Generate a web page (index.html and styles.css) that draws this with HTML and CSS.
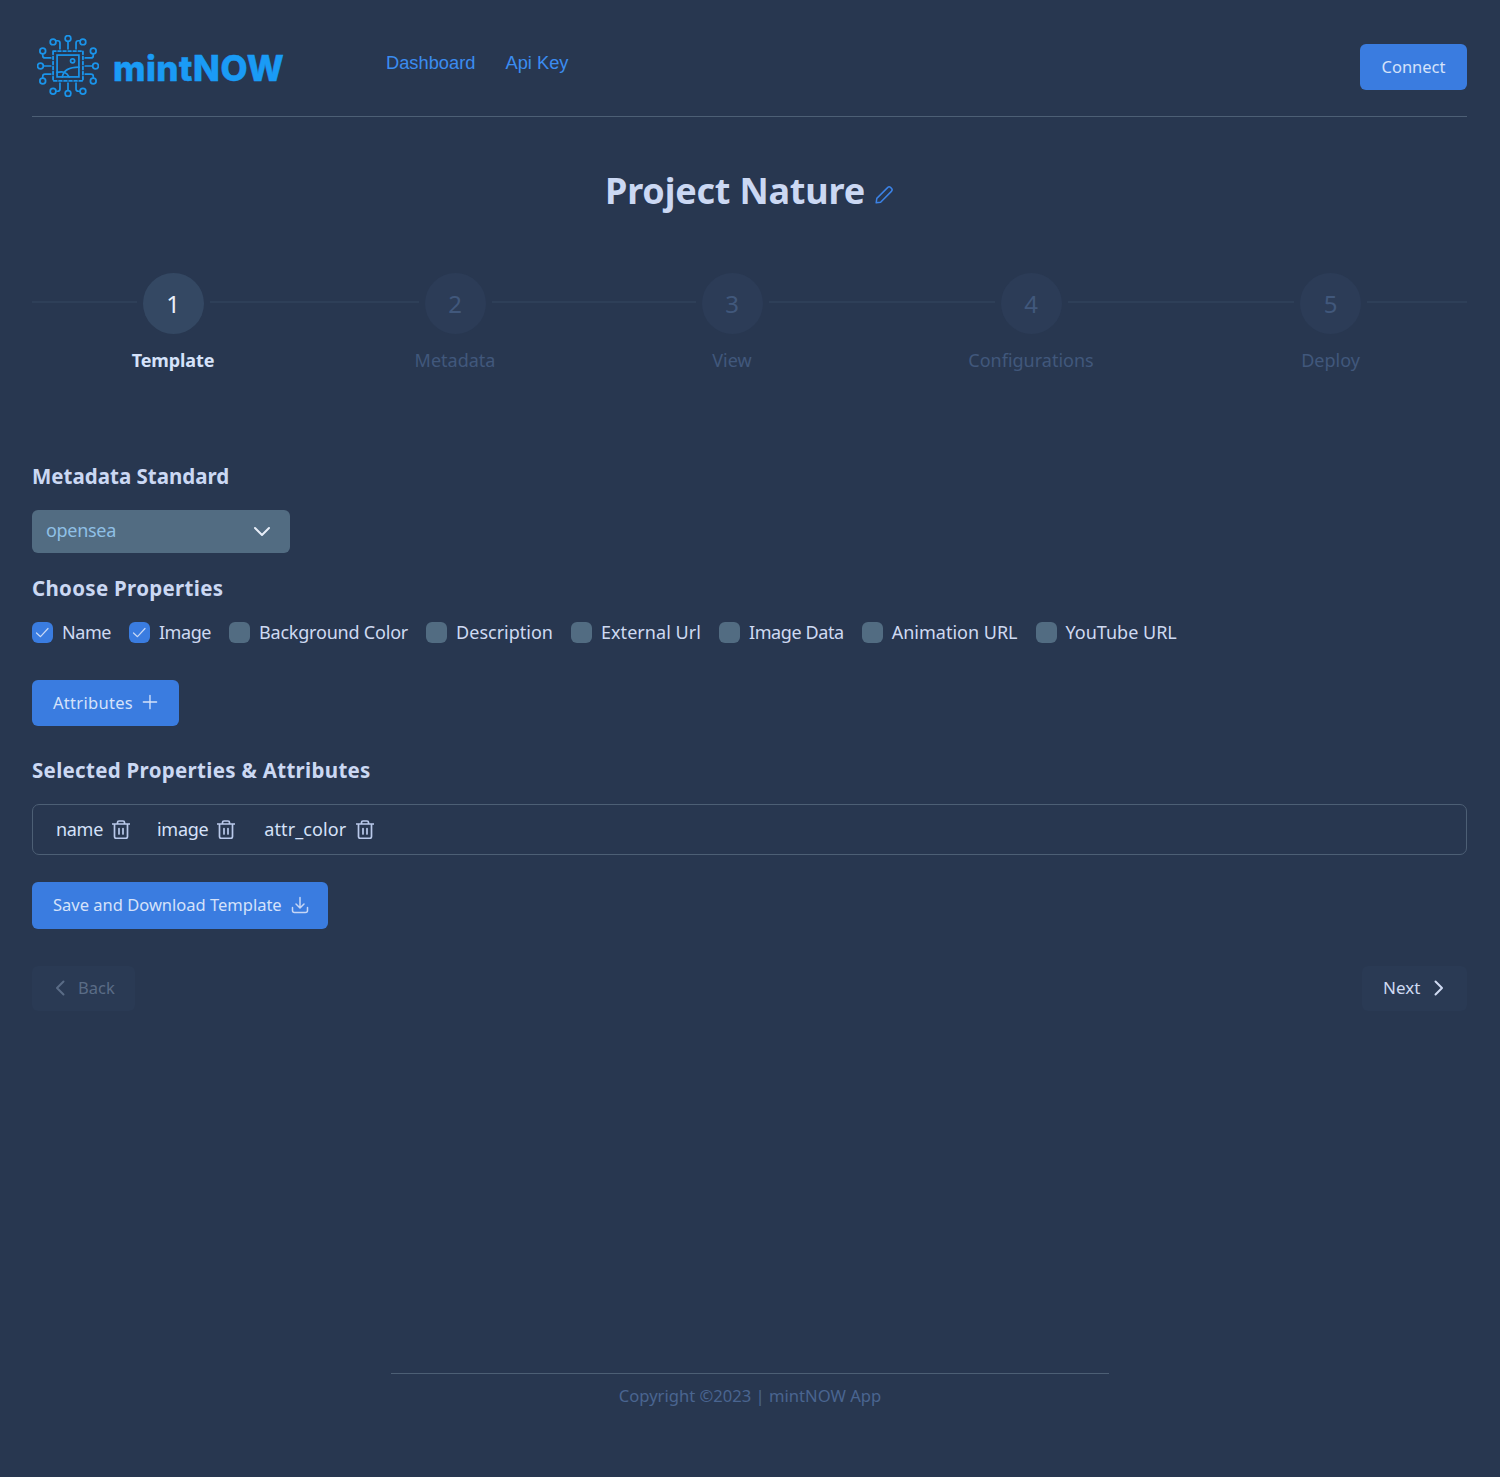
FILE: index.html
```html
<!DOCTYPE html>
<html lang="en">
<head>
<meta charset="utf-8">
<title>mintNOW</title>
<link rel="stylesheet" href="styles.css">
</head>
<body>
<div class="page">
  <header class="header">
    <div class="brand">
      <svg class="logo-mark" viewBox="4 4 54 54" fill="none" stroke="#1a94ea" stroke-width="1.5" stroke-linecap="round">
        <rect x="21.500" y="21.500" width="19" height="19" stroke-width="1.500"/>
        <rect x="18" y="18" width="26" height="26" stroke-width="1.600" stroke-dasharray="2.400 2"/>
        <circle cx="35" cy="26.500" r="1.800"/>
        <path d="M21.500 36.500c5-1 8-.5 10.500 4M26 40.500c1-5 6-8.500 14.500-8.500"/>
        <path d="M31 10v6"/><circle cx="31" cy="7" r="2.500"/>
        <path d="M31 52v-6"/><circle cx="31" cy="55" r="2.500"/>
        <path d="M10 31h6"/><circle cx="7" cy="31" r="2.500"/>
        <path d="M52 31h-6"/><circle cx="55" cy="31" r="2.500"/>
        <path d="M24 16v-5q0-2-2-2h-1"/><circle cx="18" cy="10" r="2.500"/>
        <path d="M38 16v-5q0-2 2-2h1"/><circle cx="44" cy="10" r="2.500"/>
        <path d="M24 46v5q0 2-2 2h-1"/><circle cx="18" cy="53" r="2.500"/>
        <path d="M38 46v5q0 2 2 2h1"/><circle cx="44" cy="53" r="2.500"/>
        <path d="M16 24h-5q-2 0-2-2v-1"/><circle cx="9" cy="18" r="2.500"/>
        <path d="M46 24h5q2 0 2-2v-1"/><circle cx="53" cy="18" r="2.500"/>
        <path d="M16 38h-5q-2 0-2 2v1"/><circle cx="9" cy="44" r="2.500"/>
        <path d="M46 38h5q2 0 2 2v1"/><circle cx="53" cy="44" r="2.500"/>
      </svg>
      <span class="logo-text">mintNOW</span>
    </div>
    <nav class="nav">
      <a class="nav-link">Dashboard</a>
      <a class="nav-link">Api Key</a>
    </nav>
    <button class="btn btn-connect">Connect</button>
  </header>

  <h1 class="title">
    <span>Project Nature</span>
    <svg class="pencil" viewBox="0 0 20 20" fill="none" stroke="#3b82e6" stroke-width="1.5" stroke-linejoin="round">
      <path d="M2.200 17.800l.6-4.400L13.600 2.600a2.200 2.200 0 0 1 3.100 0l.7.7a2.200 2.200 0 0 1 0 3.100L6.600 17.200z"/>
    </svg>
  </h1>

  <div class="stepper">
    <div class="step active"><div class="step-top"><i class="step-line"></i><span class="step-circle">1</span><i class="step-line"></i></div><span class="step-label">Template</span></div>
    <div class="step"><div class="step-top"><i class="step-line"></i><span class="step-circle">2</span><i class="step-line"></i></div><span class="step-label">Metadata</span></div>
    <div class="step"><div class="step-top"><i class="step-line"></i><span class="step-circle">3</span><i class="step-line"></i></div><span class="step-label">View</span></div>
    <div class="step"><div class="step-top"><i class="step-line"></i><span class="step-circle">4</span><i class="step-line"></i></div><span class="step-label">Configurations</span></div>
    <div class="step"><div class="step-top"><i class="step-line"></i><span class="step-circle">5</span><i class="step-line"></i></div><span class="step-label">Deploy</span></div>
  </div>

  <h2 class="section-title first">Metadata Standard</h2>
  <div class="select">
    <span class="select-value">opensea</span>
    <svg class="select-chevron" viewBox="0 0 20 20" fill="none" stroke="#e8eef8" stroke-width="2" stroke-linecap="round" stroke-linejoin="round"><path d="M3 6l7 7 7-7"/></svg>
  </div>

  <h2 class="section-title choose">Choose Properties</h2>
  <div class="checks">
    <label class="check tight"><span class="box on"><svg viewBox="0 0 21 21" fill="none" stroke="#c8d8f5" stroke-width="1.200" stroke-linecap="round" stroke-linejoin="round"><path d="M4.500 11l4 3.700L16 6.500"/></svg></span>Name</label>
    <label class="check tight"><span class="box on"><svg viewBox="0 0 21 21" fill="none" stroke="#c8d8f5" stroke-width="1.200" stroke-linecap="round" stroke-linejoin="round"><path d="M4.500 11l4 3.700L16 6.500"/></svg></span>Image</label>
    <label class="check"><span class="box"></span>Background Color</label>
    <label class="check loose"><span class="box"></span>Description</label>
    <label class="check wide"><span class="box"></span>External Url</label>
    <label class="check mid"><span class="box"></span>Image Data</label>
    <label class="check loose"><span class="box"></span>Animation URL</label>
    <label class="check loose"><span class="box"></span>YouTube URL</label>
  </div>

  <button class="btn btn-attr">Attributes
    <svg class="btn-icon" viewBox="0 0 18 18" fill="none" stroke="#d5e2fa" stroke-width="1.500" stroke-linecap="round"><path d="M9 1.500v15M1.500 9h15"/></svg>
  </button>

  <h2 class="section-title selected">Selected Properties &amp; Attributes</h2>
  <div class="chips">
    <span class="chip">name<svg class="trash" viewBox="1 .5 18 19" fill="none" stroke="#b9c9ea" stroke-width="1.700" stroke-linecap="round" stroke-linejoin="round"><path d="M1.500 4.500h17M6.500 4.500V3a1.500 1.500 0 0 1 1.500-1.500h4A1.500 1.500 0 0 1 13.500 3v1.500M3.500 4.500V17a1.800 1.800 0 0 0 1.800 1.800h9.400a1.800 1.800 0 0 0 1.800-1.800V4.500M8 9v5.500M12 9v5.500"/></svg></span>
    <span class="chip">image<svg class="trash" viewBox="1 .5 18 19" fill="none" stroke="#b9c9ea" stroke-width="1.700" stroke-linecap="round" stroke-linejoin="round"><path d="M1.500 4.500h17M6.500 4.500V3a1.500 1.500 0 0 1 1.500-1.500h4A1.500 1.500 0 0 1 13.500 3v1.500M3.500 4.500V17a1.800 1.800 0 0 0 1.800 1.800h9.400a1.800 1.800 0 0 0 1.800-1.800V4.500M8 9v5.500M12 9v5.500"/></svg></span>
    <span class="chip chip-wide">attr_color<svg class="trash" viewBox="1 .5 18 19" fill="none" stroke="#b9c9ea" stroke-width="1.700" stroke-linecap="round" stroke-linejoin="round"><path d="M1.500 4.500h17M6.500 4.500V3a1.500 1.500 0 0 1 1.500-1.500h4A1.500 1.500 0 0 1 13.500 3v1.500M3.500 4.500V17a1.800 1.800 0 0 0 1.800 1.800h9.400a1.800 1.800 0 0 0 1.800-1.800V4.500M8 9v5.500M12 9v5.500"/></svg></span>
  </div>

  <button class="btn btn-save">Save and Download Template
    <svg class="btn-icon" viewBox="0 0 18 18" fill="none" stroke="#c6d6f5" stroke-width="1.500" stroke-linecap="round" stroke-linejoin="round"><path d="M9 1.500v10M5 8l4 4 4-4M1.500 11.500v3a2 2 0 0 0 2 2h11a2 2 0 0 0 2-2v-3"/></svg>
  </button>

  <div class="pager">
    <button class="pager-btn back"><svg class="pager-icon" viewBox="0 0 12 18" fill="none" stroke="currentColor" stroke-width="2" stroke-linecap="round" stroke-linejoin="round"><path d="M9.500 2.500L3 9l6.500 6.500"/></svg>Back</button>
    <button class="pager-btn next">Next<svg class="pager-icon" viewBox="0 0 12 18" fill="none" stroke="currentColor" stroke-width="2" stroke-linecap="round" stroke-linejoin="round"><path d="M2.500 2.500L9 9l-6.500 6.500"/></svg></button>
  </div>

  <footer class="footer">Copyright ©2023 | mintNOW App</footer>
</div>
</body>
</html>
```

FILE: styles.css
```css
* { box-sizing: border-box; }
html, body { margin: 0; padding: 0; }
body {
  background: #283750;
  color: #cfdaf2;
  font-family: "Noto Sans", "Open Sans", sans-serif;
  height: 1477px;
  overflow: hidden;
}
.page { padding: 0 33px 0 32px; }
.header {
  height: 117px;
  border-bottom: 1px solid #4d5f75;
  display: flex;
  align-items: flex-start;
}
.brand { display: flex; align-items: flex-start; margin: 35px 0 0 5px; width: 349px; }
.logo-mark { width: 62px; height: 62px; flex: none; }
.logo-text {
  font-family: "Inter", sans-serif;
  font-weight: 800;
  font-size: 35px;
  line-height: 62px;
  color: #1a9bf5;
  margin: 2px 0 0 14px;
  letter-spacing: .5px;
  -webkit-text-stroke: .5px #1a9bf5;
}
.nav { display: flex; gap: 30px; margin-top: 52px; }
.nav-link {
  font-family: "Liberation Sans", Arial, sans-serif;
  font-size: 18.300px;
  line-height: 22px;
  color: #3b8cf0;
}
.btn {
  display: inline-flex;
  align-items: center;
  border: 0;
  border-radius: 6px;
  background: #3a7ce0;
  color: #d5e2fa;
  font-family: inherit;
  font-size: 16.500px;
  height: 46px;
  padding: 0 21px 2px;
}
.btn-connect { margin: 44px 0 0 auto; width: 107px; justify-content: center; padding: 0 0 2px; }
.btn-icon { width: 18px; height: 18px; margin-left: 9px; }
.title {
  margin: 51px 0 0;
  height: 46px;
  display: flex;
  justify-content: center;
  align-items: center;
  font-size: 36px;
  letter-spacing: -.2px;
  line-height: 46px;
  font-weight: 700;
  color: #cbd8f3;
}
.pencil { width: 20px; height: 20px; margin: 7px 0 0 9px; }
.stepper {
  margin-top: 59px;
  display: grid;
  grid-template-columns: 282px 282px 272px 326px 273px;
}
.step { display: flex; flex-direction: column; align-items: center; }
.step-top { display: flex; align-items: flex-start; width: 100%; gap: 6px; }
.step-line { flex: 1; height: 2px; margin-top: 28px; background: #2e3f58; }
.step-circle {
  width: 61px;
  height: 61px;
  border-radius: 50%;
  background: #2c3c57;
  color: #41587c;
  display: flex;
  align-items: center;
  justify-content: center;
  font-size: 24px;
  padding-bottom: 1px;
}
.step-label { margin-top: 12px; font-size: 18px; line-height: 28px; color: #41587c; }
.active .step-circle { background: #344863; color: #e9f0fb; }
.active .step-label { color: #d5e2fa; font-weight: 700; letter-spacing: -.1px; }
.section-title { margin: 0; font-size: 20.500px; letter-spacing: .3px; line-height: 28px; font-weight: 700; color: #cbd8f3; }
.section-title.first { margin-top: 88px; letter-spacing: 0; }
.section-title.choose { margin-top: 21px; }
.section-title.selected { margin-top: 30px; }
.select {
  margin-top: 20px;
  width: 258px;
  height: 43px;
  border-radius: 6px;
  background: #526c82;
  color: #8fc0e6;
  font-size: 18px;
  display: flex;
  align-items: center;
  justify-content: space-between;
  padding: 0 18px 0 14px;
}
.select-value { letter-spacing: -.3px; margin-top: -4px; }
.select-chevron { width: 20px; height: 20px; }
.checks { display: flex; margin-top: 18px; gap: 18px; height: 24px; align-items: center; }
.check { display: flex; align-items: center; font-size: 18px; line-height: 24px; color: #cfdaf2; gap: 9px; white-space: nowrap; letter-spacing: -.2px; }
.check.tight { letter-spacing: -.45px; }
.check.mid { letter-spacing: -.4px; }
.check.loose { letter-spacing: 0; }
.check.wide { letter-spacing: .05px; }
.box { width: 21px; height: 21px; border-radius: 6px; background: #526c82; flex: none; }
.box.on { background: #3a7ce0; }
.box svg { display: block; width: 21px; height: 21px; }
.btn-attr { margin-top: 36px; width: 147px; display: flex; letter-spacing: .3px; }
.chips {
  margin-top: 20px;
  height: 51px;
  border: 1px solid #4d5f75;
  border-radius: 7px;
  display: flex;
  align-items: center;
  padding: 0 0 1px 23px;
  gap: 27px;
}
.chip { display: flex; align-items: center; font-size: 18px; color: #d5e2fa; letter-spacing: -.3px; }
.chip-wide { letter-spacing: .1px; margin-left: 2px; }
.trash { width: 18px; height: 19px; margin-left: 9px; }
.chip-wide .trash { margin-left: 10px; }
.btn-save { margin-top: 27px; width: 296px; height: 47px; display: flex; padding: 0 0 2px 21px; }
.pager { margin-top: 37px; display: flex; justify-content: space-between; }
.pager-btn {
  display: flex;
  align-items: center;
  height: 45px;
  border: 0;
  border-radius: 6px;
  background: #2a3a54;
  font-family: inherit;
  font-size: 16.500px;
}
.pager-icon { width: 12px; height: 18px; flex: none; }
.back { width: 103px; color: #5a6c86; padding: 0 0 2px 22px; gap: 12px; }
.next { width: 105px; color: #cfdaf2; padding: 0 0 2px 21px; gap: 13px; font-size: 17px; }
.footer {
  margin: 362px 358px 0 359px;
  border-top: 1px solid #4d5f75;
  padding-top: 9px;
  text-align: center;
  font-size: 16.600px;
  line-height: 26px;
  color: #4a6590;
}
```
